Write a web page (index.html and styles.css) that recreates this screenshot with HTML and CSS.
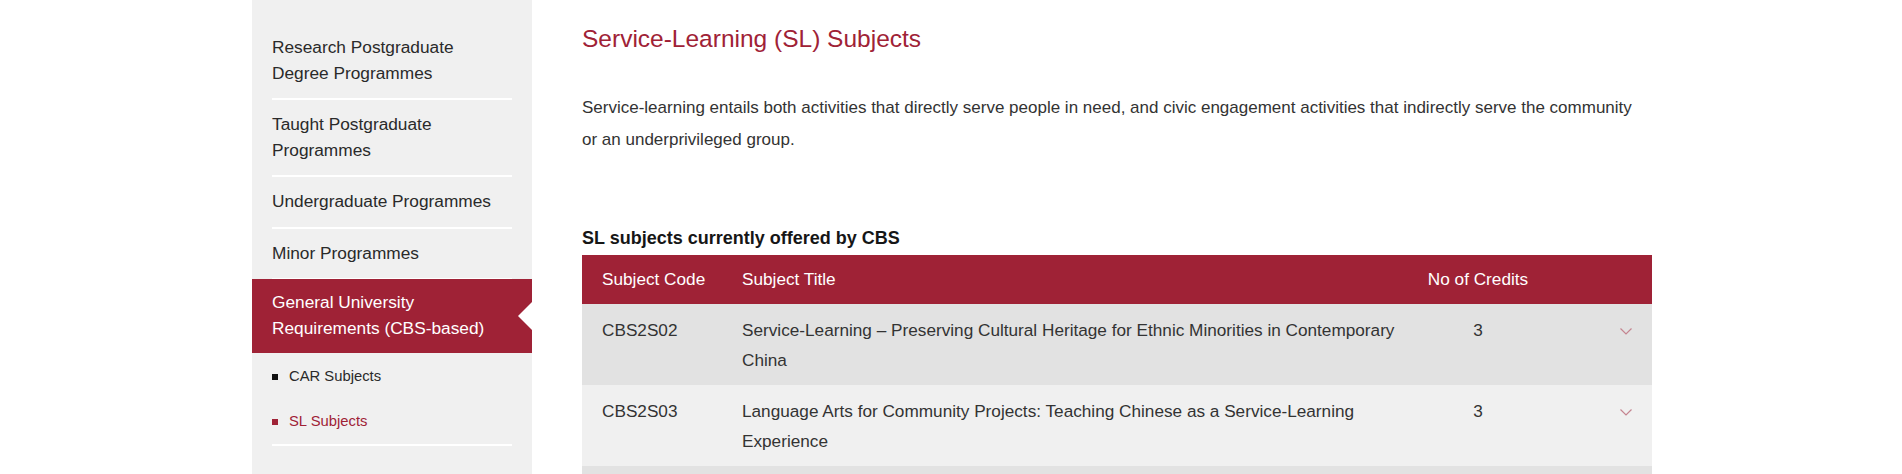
FILE: index.html
```html
<!DOCTYPE html>
<html lang="en">
<head>
<meta charset="utf-8">
<title>Service-Learning (SL) Subjects</title>
<link rel="stylesheet" href="styles.css">
</head>
<body>
<div class="page">
  <aside class="sidenav">
    <ul class="nav">
      <li class="nav-item"><a class="nav-link" href="#">Research Postgraduate<br>Degree Programmes</a></li>
      <li class="nav-item"><a class="nav-link" href="#">Taught Postgraduate<br>Programmes</a></li>
      <li class="nav-item"><a class="nav-link" href="#">Undergraduate Programmes</a></li>
      <li class="nav-item"><a class="nav-link" href="#">Minor Programmes</a></li>
      <li class="nav-item is-active">
        <a class="nav-link" href="#">General University<br>Requirements (CBS-based)</a>
        <ul class="subnav">
          <li class="subnav-item"><a class="subnav-link" href="#">CAR Subjects</a></li>
          <li class="subnav-item is-current"><a class="subnav-link" href="#">SL Subjects</a></li>
        </ul>
      </li>
    </ul>
  </aside>
  <main class="content">
    <h1 class="page-title">Service-Learning (SL) Subjects</h1>
    <p class="intro">Service-learning entails both activities that directly serve people in need, and civic engagement activities that indirectly serve the community<br>or an underprivileged group.</p>
    <h2 class="table-caption">SL subjects currently offered by CBS</h2>
    <table class="subjects">
      <colgroup>
        <col class="col-code">
        <col class="col-title">
        <col class="col-credits">
        <col class="col-toggle">
      </colgroup>
      <thead>
        <tr>
          <th class="cell-code">Subject Code</th>
          <th class="cell-title">Subject Title</th>
          <th class="cell-credits">No of Credits</th>
          <th class="cell-toggle"></th>
        </tr>
      </thead>
      <tbody>
        <tr class="row-dark">
          <td class="cell-code">CBS2S02</td>
          <td class="cell-title">Service-Learning – Preserving Cultural Heritage for Ethnic Minorities in Contemporary<br>China</td>
          <td class="cell-credits">3</td>
          <td class="cell-toggle"><svg class="chevron" width="12" height="7" viewBox="0 0 12 7"><path d="M0.5 0.5 L6 6 L11.5 0.5" fill="none" stroke="#c58590" stroke-width="1.2"/></svg></td>
        </tr>
        <tr class="row-light">
          <td class="cell-code">CBS2S03</td>
          <td class="cell-title">Language Arts for Community Projects: Teaching Chinese as a Service-Learning<br>Experience</td>
          <td class="cell-credits">3</td>
          <td class="cell-toggle"><svg class="chevron" width="12" height="7" viewBox="0 0 12 7"><path d="M0.5 0.5 L6 6 L11.5 0.5" fill="none" stroke="#c58590" stroke-width="1.2"/></svg></td>
        </tr>
        <tr class="row-dark row-peek">
          <td class="cell-code"></td>
          <td class="cell-title"></td>
          <td class="cell-credits"></td>
          <td class="cell-toggle"></td>
        </tr>
      </tbody>
    </table>
  </main>
</div>
</body>
</html>
```
FILE: styles.css
```css
html {
  overflow: hidden;
}
body {
  margin: 0;
  background: #fff;
  font-family: "Liberation Sans", Arial, Helvetica, sans-serif;
  color: #333;
}
a {
  color: inherit;
  text-decoration: none;
}
ul {
  list-style: none;
  margin: 0;
  padding: 0;
}
.page {
  width: 1400px;
  margin: 0 0 0 calc(50% - 699px);
  display: flex;
  gap: 50px;
  align-items: stretch;
  min-height: 474px;
}

/* Sidebar */
.sidenav {
  flex: 0 0 280px;
  background: #f0f0f0;
  padding-top: 23px;
}
.nav-item {
  margin: 0 20px;
  border-bottom: 2px solid #fff;
}
.nav-link {
  display: block;
  padding: 12px 0;
  font-size: 17.3px;
  line-height: 25.5px;
  color: #2a2a2a;
}
.nav-item.is-active {
  margin: 0;
  border-bottom: 0;
}
.is-active > .nav-link {
  position: relative;
  background: #9f2236;
  color: #fff;
  padding: 11px 20px 12px;
  margin-top: -1px;
}
.is-active > .nav-link::after {
  content: "";
  position: absolute;
  right: 0;
  top: 50%;
  transform: translateY(-50%);
  border-style: solid;
  border-width: 14px 14px 14px 0;
  border-color: transparent #fff transparent transparent;
}
.subnav {
  margin: 0 20px;
  border-bottom: 2px solid #fff;
}
.subnav-link {
  display: flex;
  align-items: center;
  gap: 11px;
  padding: 12px 0;
  font-size: 14.8px;
  line-height: 21px;
  color: #2a2a2a;
}
.subnav-item:first-child .subnav-link {
  padding-top: 13px;
}
.subnav-link::before {
  content: "";
  width: 6px;
  height: 6px;
  background: #111;
  flex: 0 0 6px;
}
.is-current .subnav-link {
  color: #9f2236;
}
.is-current .subnav-link::before {
  background: #9f2236;
}

/* Content */
.content {
  flex: 0 0 1070px;
}
.page-title {
  margin: 24px 0 0;
  font-size: 24.5px;
  line-height: 30px;
  font-weight: normal;
  color: #9f2236;
}
.intro {
  margin: 38px 0 0;
  font-size: 17px;
  line-height: 31.5px;
  color: #333;
}
.table-caption {
  margin: 71px 0 5px;
  font-size: 18px;
  line-height: 24px;
  font-weight: bold;
  color: #161616;
}
.subjects {
  width: 1070px;
  border-collapse: collapse;
  table-layout: fixed;
  font-size: 17.2px;
}
.col-code { width: 140px; }
.col-title { width: 696px; }
.col-credits { width: 120px; }
.col-toggle { width: 114px; }
.subjects th {
  background: #9f2236;
  color: #fff;
  font-weight: normal;
  text-align: left;
  padding: 12px 20px;
  line-height: 25px;
  white-space: nowrap;
}
.subjects td {
  padding: 11px 20px 10px;
  line-height: 30px;
  vertical-align: top;
  color: #333;
}
.subjects .cell-code {
  padding-right: 0;
}
.subjects .cell-title {
  padding-right: 10px;
}
.subjects .cell-credits {
  padding-left: 0;
  padding-right: 0;
  text-align: center;
}
.subjects .cell-toggle {
  text-align: right;
}
.row-dark td {
  background: #e2e2e2;
}
.row-light td {
  background: #f0f0f0;
}
.row-peek td {
  height: 60px;
}
.chevron {
  vertical-align: middle;
}
```
